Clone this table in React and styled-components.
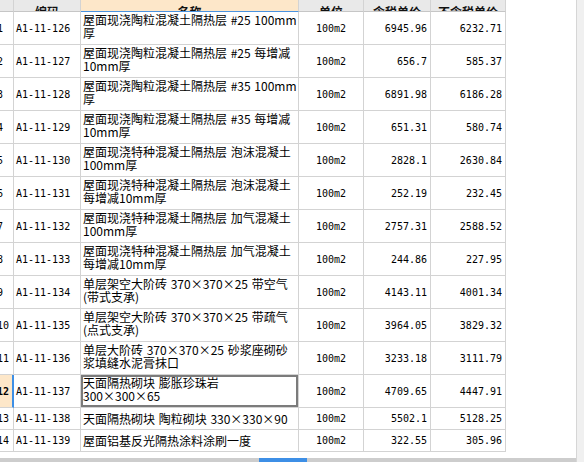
import React from 'react'
import styled, { createGlobalStyle } from 'styled-components'

const GlobalStyle = createGlobalStyle`
  html, body {
    margin: 0;
    padding: 0;
    background: #ffffff;
  }
`

const COLS = '14px 67px 218px 65px 67px 75px'

const rows = [
  { no: 1, code: 'A1-11-126', name: ['屋面现浇陶粒混凝土隔热层 #25 100mm', '厚'], unit: '100m2', tax: '6945.96', notax: '6232.71' },
  { no: 2, code: 'A1-11-127', name: ['屋面现浇陶粒混凝土隔热层 #25 每增减', '10mm厚'], unit: '100m2', tax: '656.7', notax: '585.37' },
  { no: 3, code: 'A1-11-128', name: ['屋面现浇陶粒混凝土隔热层 #35 100mm', '厚'], unit: '100m2', tax: '6891.98', notax: '6186.28' },
  { no: 4, code: 'A1-11-129', name: ['屋面现浇陶粒混凝土隔热层 #35 每增减', '10mm厚'], unit: '100m2', tax: '651.31', notax: '580.74' },
  { no: 5, code: 'A1-11-130', name: ['屋面现浇特种混凝土隔热层 泡沫混凝土', '100mm厚'], unit: '100m2', tax: '2828.1', notax: '2630.84' },
  { no: 6, code: 'A1-11-131', name: ['屋面现浇特种混凝土隔热层 泡沫混凝土', '每增减10mm厚'], unit: '100m2', tax: '252.19', notax: '232.45' },
  { no: 7, code: 'A1-11-132', name: ['屋面现浇特种混凝土隔热层 加气混凝土', '100mm厚'], unit: '100m2', tax: '2757.31', notax: '2588.52' },
  { no: 8, code: 'A1-11-133', name: ['屋面现浇特种混凝土隔热层 加气混凝土', '每增减10mm厚'], unit: '100m2', tax: '244.86', notax: '227.95' },
  { no: 9, code: 'A1-11-134', name: ['单层架空大阶砖 370×370×25 带空气', '(带式支承)'], unit: '100m2', tax: '4143.11', notax: '4001.34' },
  { no: 10, code: 'A1-11-135', name: ['单层架空大阶砖 370×370×25 带疏气', '(点式支承)'], unit: '100m2', tax: '3964.05', notax: '3829.32' },
  { no: 11, code: 'A1-11-136', name: ['单层大阶砖 370×370×25 砂浆座砌砂', '浆填缝水泥膏抹口'], unit: '100m2', tax: '3233.18', notax: '3111.79' },
  { no: 12, code: 'A1-11-137', name: ['天面隔热砌块 膨胀珍珠岩', '300×300×65'], unit: '100m2', tax: '4709.65', notax: '4447.91', selected: true },
  { no: 13, code: 'A1-11-138', name: ['天面隔热砌块 陶粒砌块 330×330×90'], unit: '100m2', tax: '5502.1', notax: '5128.25' },
  { no: 14, code: 'A1-11-139', name: ['屋面铝基反光隔热涂料涂刷一度'], unit: '100m2', tax: '322.55', notax: '305.96' },
]

const headers = ['', '编码', '名称', '单位', '含税单价', '不含税单价']

const App = () => {
  return (
    <Page>
      <GlobalStyle />
      <Main>
        <Viewport>
          <Row height={12}>
            {headers.map((h, i) => (
              <HeaderCell key={i} active={i === 2}>
                <HeaderText>{h}</HeaderText>
              </HeaderCell>
            ))}
          </Row>
          {rows.map(r => {
            const height = r.name.length > 1 ? 33 : 22
            return (
              <Row key={r.no} height={height}>
                <NoCell selected={r.selected}>
                  <NoText selected={r.selected}>{r.no}</NoText>
                </NoCell>
                <CodeCell>{r.code}</CodeCell>
                <NameCell selected={r.selected} single={r.name.length === 1}>
                  {r.name.map((line, i) => (
                    <NameLine key={i}>{line}</NameLine>
                  ))}
                </NameCell>
                <UnitCell>{r.unit}</UnitCell>
                <NumCell>{r.tax}</NumCell>
                <NumCell>{r.notax}</NumCell>
              </Row>
            )
          })}
        </Viewport>
        <HScroll>
          <Thumb />
        </HScroll>
      </Main>
      <VScroll />
    </Page>
  )
}

const Page = styled.div`
  width: 584px;
  height: 462px;
  display: flex;
  overflow: hidden;
  background: #ffffff;
`

const Main = styled.div`
  flex: 1;
  display: flex;
  flex-direction: column;
  min-width: 0;
`

const Viewport = styled.div`
  flex: 1;
  overflow: hidden;
`

const VScroll = styled.div`
  width: 7px;
  background: #f0f0f0;
  border-left: 1px solid #d6d6d6;
`

const HScroll = styled.div`
  height: 4px;
  display: flex;
  background: #cdcdcd;
  padding-left: 259px;
`

const Thumb = styled.div`
  width: 48px;
  background: #3d8fe6;
`

const Row = styled.div`
  display: grid;
  grid-template-columns: ${COLS};
  height: ${p => p.height}px;
  width: 506px;
`

const Cell = styled.div`
  box-sizing: border-box;
  border-right: 1px solid #d3d3d3;
  border-bottom: 1px solid #d3d3d3;
  overflow: hidden;
  white-space: nowrap;
  font-family: "DejaVu Sans Mono", "Liberation Mono", monospace;
  font-size: 10px;
  color: #000000;
  display: flex;
  align-items: center;
`

const HeaderCell = styled(Cell)`
  background: ${p => (p.active ? '#fde7c9' : '#e9e9e9')};
  border-bottom: 1px solid ${p => (p.active ? '#4b93e0' : '#c6c6c6')};
  justify-content: center;
  align-items: flex-end;
`

const HeaderText = styled.span`
  font-family: "Noto Sans CJK SC", sans-serif;
  font-size: 12px;
  font-weight: bold;
  line-height: 14px;
  margin-bottom: -8px;
  color: #111111;
`

const NoCell = styled(Cell)`
  background: ${p => (p.selected ? '#fde7c9' : '#ffffff')};
  border-right: ${p => (p.selected ? '2px solid #3d8fe6' : '1px solid #d3d3d3')};
`

const NoText = styled.span`
  margin-left: -3px;
  font-weight: ${p => (p.selected ? 'bold' : 'normal')};
`

const CodeCell = styled(Cell)`
  padding-left: 2px;
`

const NameCell = styled(Cell)`
  flex-direction: column;
  align-items: flex-start;
  justify-content: ${p => (p.single ? 'center' : 'flex-start')};
  padding: ${p => (p.single ? '0 2px' : '1px 2px 0')};
  font-family: "Noto Sans CJK SC", sans-serif;
  font-size: 12px;
  box-shadow: ${p => (p.selected ? 'inset 0 0 0 2px #7b7b7b' : 'none')};
`

const NameLine = styled.div`
  line-height: 13px;
  height: 13px;
  word-spacing: 1px;
`

const UnitCell = styled(Cell)`
  justify-content: center;
`

const NumCell = styled(Cell)`
  justify-content: flex-end;
  padding-right: 3px;
`

export default App
